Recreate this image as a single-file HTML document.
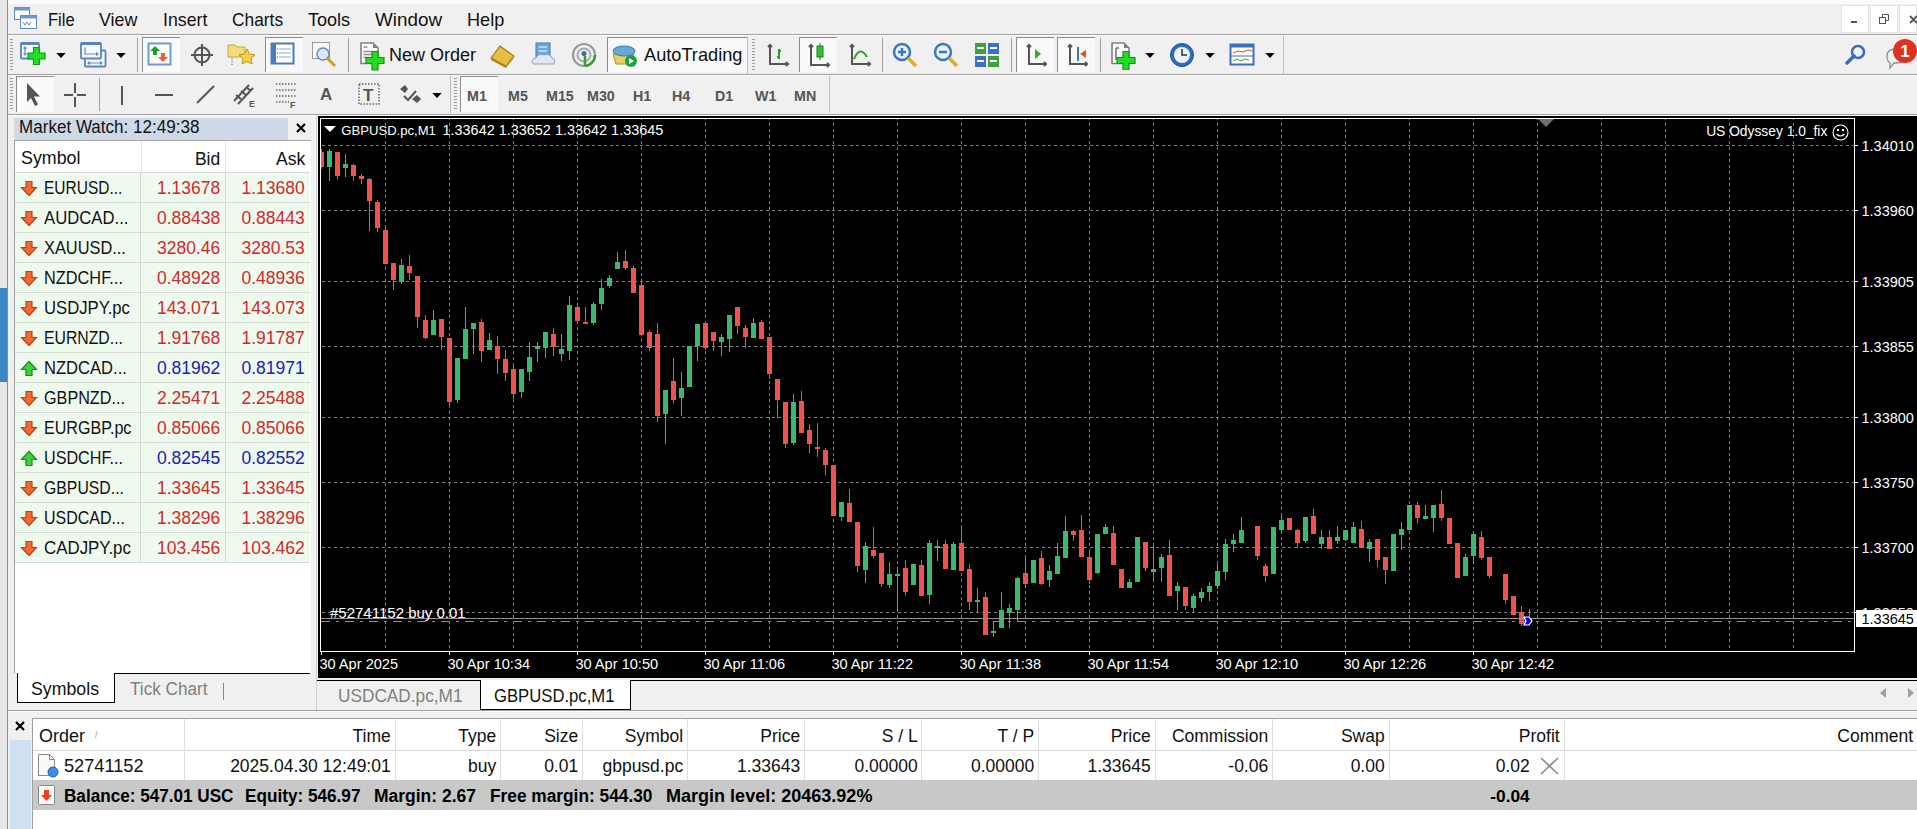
<!DOCTYPE html>
<html><head><meta charset="utf-8"><style>
html,body{margin:0;padding:0;}
body{width:1917px;height:829px;overflow:hidden;position:relative;background:#f0f0f0;font-family:"Liberation Sans", sans-serif;}
</style></head><body>
<div style="position:absolute;left:0px;top:0px;width:1917px;height:4px;background:#fbfbfb;"></div>
<div style="position:absolute;left:0px;top:0px;width:7px;height:829px;background:#e6e6e6;"></div>
<div style="position:absolute;left:0px;top:288px;width:7px;height:94px;background:#3a87c4;"></div>
<div style="position:absolute;left:7px;top:0px;width:1px;height:829px;background:#8c8c8c;"></div>
<div style="position:absolute;left:8px;top:34px;width:1909px;height:1px;background:#a0a0a0;"></div>
<svg style="position:absolute;left:13px;top:6px" width="25" height="24" viewBox="0 0 25 24"><rect x="1.5" y="1.5" width="15" height="12" fill="#fff" stroke="#5a88c0"/><rect x="1.5" y="1.5" width="15" height="3" fill="#6a98d0"/><rect x="7.5" y="9.5" width="16" height="13" fill="#fff" stroke="#5a88c0"/><rect x="7.5" y="9.5" width="16" height="3" fill="#6a98d0"/><path d="M10,16 l2,3 2,-3 2,3 2,-3" stroke="#5a88c0" fill="none"/></svg>
<div style="position:absolute;left:47.6px;top:11.93px;font-size:17.8px;line-height:1;color:#111;font-weight:400;white-space:pre;transform:scaleX(0.9309);transform-origin:left top;">File</div>
<div style="position:absolute;left:99.10000000000001px;top:11.93px;font-size:17.8px;line-height:1;color:#111;font-weight:400;white-space:pre;transform:scaleX(1.0036);transform-origin:left top;">View</div>
<div style="position:absolute;left:162.79999999999998px;top:11.93px;font-size:17.8px;line-height:1;color:#111;font-weight:400;white-space:pre;transform:scaleX(0.9973);transform-origin:left top;">Insert</div>
<div style="position:absolute;left:232.0px;top:11.93px;font-size:17.8px;line-height:1;color:#111;font-weight:400;white-space:pre;transform:scaleX(0.9747);transform-origin:left top;">Charts</div>
<div style="position:absolute;left:307.9px;top:11.93px;font-size:17.8px;line-height:1;color:#111;font-weight:400;white-space:pre;transform:scaleX(1.0155);transform-origin:left top;">Tools</div>
<div style="position:absolute;left:375.2px;top:11.93px;font-size:17.8px;line-height:1;color:#111;font-weight:400;white-space:pre;transform:scaleX(1.0599);transform-origin:left top;">Window</div>
<div style="position:absolute;left:467.4px;top:11.93px;font-size:17.8px;line-height:1;color:#111;font-weight:400;white-space:pre;transform:scaleX(1.0189);transform-origin:left top;">Help</div>
<div style="position:absolute;left:1841px;top:5px;width:28px;height:28px;background:#fff;box-sizing:border-box;border:1px solid #e4e4e4;"></div>
<div style="position:absolute;left:1870px;top:5px;width:28px;height:28px;background:#fff;box-sizing:border-box;border:1px solid #e4e4e4;"></div>
<div style="position:absolute;left:1899px;top:5px;width:18px;height:28px;background:#fff;box-sizing:border-box;border:1px solid #e4e4e4;"></div>
<div style="position:absolute;left:1851px;top:21px;width:6px;height:2px;background:#555;"></div>
<svg style="position:absolute;left:1879px;top:14px" width="10" height="10" viewBox="0 0 10 10"><rect x="0.5" y="3.5" width="6" height="6" fill="none" stroke="#555"/><path d="M3.5,3.5 v-3 h6 v6 h-3" fill="none" stroke="#555"/></svg>
<svg style="position:absolute;left:1909px;top:15px" width="9" height="9" viewBox="0 0 9 9"><path d="M1,1 l7,7 M8,1 l-7,7" stroke="#555" stroke-width="1.8"/></svg>
<div style="position:absolute;left:8px;top:35px;width:1909px;height:1px;background:#fdfdfd;"></div>
<div style="position:absolute;left:8px;top:74px;width:1909px;height:1px;background:#a0a0a0;"></div>
<div style="position:absolute;left:8px;top:75px;width:1909px;height:1px;background:#fdfdfd;"></div>
<div style="position:absolute;left:10px;top:39px;width:3px;height:33px;background:repeating-linear-gradient(#9a9a9a 0 1px, transparent 1px 3px);"></div>
<svg style="position:absolute;left:20px;top:42px" width="27" height="24" viewBox="0 0 27 24"><rect x="1" y="1" width="18" height="15.5" rx="1" fill="#f6faff" stroke="#5a84bc" stroke-width="1.8"/><rect x="1" y="0.5" width="18" height="2.5" fill="#5a84bc"/><path d="M5,5 v8 M3.5,6.5 l1.5,-1.5 1.5,1.5 M3.5,11.5 l1.5,1.5 1.5,-1.5" stroke="#6a8cb8" stroke-width="1.2" fill="none"/><path d="M13.5,5.5 h6 v5.5 h5.5 v6 h-5.5 v5.5 h-6 v-5.5 h-5.5 v-6 h5.5 z" fill="#22dd22" stroke="#159a15" stroke-width="1.2"/></svg>
<svg style="position:absolute;left:56px;top:53px" width="10" height="6" viewBox="0 0 10 6"><polygon points="0.3,0 9.7,0 5,5" fill="#000"/></svg>
<svg style="position:absolute;left:80px;top:42px" width="27" height="26" viewBox="0 0 27 26"><rect x="5" y="8.5" width="20.5" height="16" rx="1" fill="#f6faff" stroke="#5a84bc" stroke-width="1.8"/><rect x="1" y="1" width="20" height="15.5" rx="1" fill="#f6faff" stroke="#5a84bc" stroke-width="1.8"/><rect x="1" y="0.5" width="20" height="2.5" fill="#5a84bc"/><path d="M4,12 h14 M16,10.5 l2,1.5 -2,1.5 M5,5.5 v7" stroke="#6a8cb8" stroke-width="1.2" fill="none"/><path d="M8,21 h14 M10,19.5 l-2,1.5 2,1.5 M20,19.5 l2,1.5 -2,1.5" stroke="#6a8cb8" stroke-width="1.2" fill="none"/></svg>
<svg style="position:absolute;left:116px;top:53px" width="10" height="6" viewBox="0 0 10 6"><polygon points="0.3,0 9.7,0 5,5" fill="#000"/></svg>
<div style="position:absolute;left:137px;top:38px;width:1px;height:34px;background:#a0a0a0;"></div>
<div style="position:absolute;left:142px;top:37px;width:38px;height:35px;background:#f9f9f9;box-sizing:border-box;border-top:1px solid #8c8c8c;border-left:1px solid #8c8c8c;"></div>
<svg style="position:absolute;left:147px;top:42px" width="25" height="24" viewBox="0 0 25 24"><rect x="1.5" y="1.5" width="22" height="21" fill="#fff" stroke="#6f9bd4" stroke-width="2"/><path d="M8,4 l-5,5 h3 v4 h4 v-4 h3 z" fill="#22a022"/><path d="M16,20 l5,-5 h-3 v-4 h-4 v4 h-3 z" fill="#f06030"/></svg>
<svg style="position:absolute;left:190px;top:43px" width="24" height="24" viewBox="0 0 24 24"><circle cx="12" cy="12" r="7.5" fill="none" stroke="#555" stroke-width="2"/><path d="M12,1 v22 M1,12 h22" stroke="#555" stroke-width="2"/></svg>
<svg style="position:absolute;left:227px;top:41px" width="29" height="26" viewBox="0 0 29 26"><path d="M1,4 h7 l2,2 h8 v10 h-17 z" fill="#f4dc78" stroke="#c8a840"/><path d="M20,8 l2.5,5 5.5,.8 -4,3.8 1,5.4 -5,-2.6 -5,2.6 1,-5.4 -4,-3.8 5.5,-.8z" fill="#f8d040" stroke="#c09020"/><path d="M5,17 v8" stroke="#666" stroke-dasharray="1,1"/></svg>
<div style="position:absolute;left:265px;top:37px;width:38px;height:35px;background:#f9f9f9;box-sizing:border-box;border-top:1px solid #8c8c8c;border-left:1px solid #8c8c8c;"></div>
<svg style="position:absolute;left:270px;top:42px" width="25" height="24" viewBox="0 0 25 24"><rect x="1.5" y="1.5" width="22" height="20" fill="#fff" stroke="#4a7cc0" stroke-width="2"/><rect x="2" y="2" width="4" height="19" fill="#4a7cc0"/><path d="M9,7 h12 M9,11 h12 M9,15 h12" stroke="#8aa8d0"/><path d="M7,7 h1 M7,11 h1 M7,15 h1" stroke="#a02020"/></svg>
<svg style="position:absolute;left:311px;top:41px" width="28" height="27" viewBox="0 0 28 27"><rect x="1.5" y="1.5" width="17" height="16" fill="#f8f8f8" stroke="#999"/><circle cx="12" cy="13" r="6" fill="#d8e8f8" stroke="#6a8cc0" stroke-width="1.5"/><path d="M16,17 l8,8" stroke="#d0a020" stroke-width="3"/></svg>
<div style="position:absolute;left:348px;top:38px;width:1px;height:34px;background:#a0a0a0;"></div>
<svg style="position:absolute;left:360px;top:42px" width="27" height="29" viewBox="0 0 27 29"><path d="M1,1 h12 l5,5 v15.5 h-17 z" fill="#fbfbfb" stroke="#808080" stroke-width="1.6"/><path d="M13,1 v5 h5" fill="#808080"/><path d="M3.5,5 h4 M3.5,9.5 h9 M3.5,12.5 h9 M3.5,15.5 h5" stroke="#909090" stroke-width="1.5"/><path d="M12,9.5 h6 v6 h6 v6 h-6 v6.5 h-6 v-6.5 h-6 v-6 h6 z" fill="#22dd22" stroke="#149614" stroke-width="1.2"/></svg>
<div style="position:absolute;left:389px;top:45.76px;font-size:18px;line-height:1;color:#111;font-weight:400;white-space:pre;transform:scaleX(0.9998);transform-origin:left top;">New Order</div>
<svg style="position:absolute;left:489px;top:44px" width="27" height="24" viewBox="0 0 27 24"><path d="M2,14 L11,2 L25,12 L17,22 z" fill="#e8c040" stroke="#a07818" stroke-width="1.2"/><path d="M2,14 L17,22 L17,24 L2,16 z" fill="#b08020"/><path d="M17,22 L25,12 v2 L17,24z" fill="#c89830"/></svg>
<svg style="position:absolute;left:530px;top:42px" width="26" height="24" viewBox="0 0 26 24"><rect x="6" y="1" width="14" height="14" fill="#6aa8e0" stroke="#3a78c0"/><path d="M9,5 h8 M9,9 h8" stroke="#fff"/><path d="M3,22 q-3,-5 3,-6 q2,-5 8,-3 q6,-2 8,3 q4,1 2,6 z" fill="#dfe8f2" stroke="#8aa0c0"/></svg>
<svg style="position:absolute;left:571px;top:42px" width="26" height="26" viewBox="0 0 26 26"><circle cx="13" cy="13" r="11" fill="none" stroke="#9a9a9a" stroke-width="2.2"/><circle cx="13" cy="13" r="6.5" fill="none" stroke="#a8a8a8" stroke-width="2"/><circle cx="13" cy="11.5" r="2.5" fill="#3a6cb0"/><path d="M14,24 A11,11 0 0 0 24,13" fill="none" stroke="#38a038" stroke-width="2.6"/><path d="M14,14 v10" stroke="#38a038" stroke-width="2.6"/></svg>
<div style="position:absolute;left:607px;top:37px;width:141px;height:35px;background:#f9f9f9;box-sizing:border-box;border-top:1px solid #8c8c8c;border-left:1px solid #8c8c8c;"></div>
<svg style="position:absolute;left:611px;top:42px" width="27" height="26" viewBox="0 0 27 26"><path d="M2,12 l3,10 h14 l4,-10 z" fill="#e8d060" stroke="#b09030"/><ellipse cx="13" cy="9" rx="11" ry="5" fill="#6aa8d8" stroke="#3a78b0"/><circle cx="20" cy="19" r="6" fill="#20a040"/><path d="M18,16 l5,3 -5,3z" fill="#fff"/></svg>
<div style="position:absolute;left:643.5px;top:45.59px;font-size:18.2px;line-height:1;color:#111;font-weight:400;white-space:pre;transform:scaleX(1.0002);transform-origin:left top;">AutoTrading</div>
<div style="position:absolute;left:747px;top:36px;width:1px;height:38px;background:#c0c0c0;"></div>
<div style="position:absolute;left:752px;top:39px;width:3px;height:33px;background:repeating-linear-gradient(#9a9a9a 0 1px, transparent 1px 3px);"></div>
<svg style="position:absolute;left:766px;top:43px" width="24" height="24" viewBox="0 0 24 24"><path d="M4,2 v19 h18 M2,4 l2,-2 2,2 M20,19 l2,2 -2,2" stroke="#555" stroke-width="2" fill="none"/><path d="M13,6 v10 M11,14 h2 M13,8 h2" stroke="#28a028" stroke-width="2"/></svg>
<div style="position:absolute;left:799px;top:37px;width:38px;height:35px;background:#f9f9f9;box-sizing:border-box;border-top:1px solid #8c8c8c;border-left:1px solid #8c8c8c;"></div>
<svg style="position:absolute;left:807px;top:42px" width="24" height="26" viewBox="0 0 24 26"><path d="M4,3 v20 h18 M2,5 l2,-2 2,2 M20,21 l2,2 -2,2" stroke="#555" stroke-width="2" fill="none"/><rect x="10" y="4" width="6" height="11" fill="#30c030" stroke="#208020"/><path d="M13,1 v3 M13,15 v3" stroke="#208020"/></svg>
<svg style="position:absolute;left:848px;top:43px" width="24" height="24" viewBox="0 0 24 24"><path d="M4,2 v19 h18 M2,4 l2,-2 2,2 M20,19 l2,2 -2,2" stroke="#555" stroke-width="2" fill="none"/><path d="M6,16 q6,-14 13,-2" stroke="#30a030" stroke-width="2" fill="none"/></svg>
<div style="position:absolute;left:882px;top:38px;width:1px;height:34px;background:#a0a0a0;"></div>
<svg style="position:absolute;left:892px;top:42px" width="26" height="26" viewBox="0 0 26 26"><circle cx="10" cy="10" r="8" fill="#e8f0fa" stroke="#3a78c0" stroke-width="2.5"/><path d="M6,10 h8 M10,6 v8" stroke="#3a78c0" stroke-width="2.5"/><path d="M16,16 l8,8" stroke="#d8b028" stroke-width="3.5"/></svg>
<svg style="position:absolute;left:933px;top:42px" width="26" height="26" viewBox="0 0 26 26"><circle cx="10" cy="10" r="8" fill="#e8f0fa" stroke="#3a78c0" stroke-width="2.5"/><path d="M6,10 h8" stroke="#3a78c0" stroke-width="2.5"/><path d="M16,16 l8,8" stroke="#d8b028" stroke-width="3.5"/></svg>
<svg style="position:absolute;left:974px;top:42px" width="26" height="26" viewBox="0 0 26 26"><rect x="1" y="1" width="11" height="11" fill="#40a040"/><rect x="14" y="1" width="11" height="11" fill="#3a70c8"/><rect x="1" y="14" width="11" height="11" fill="#3a70c8"/><rect x="14" y="14" width="11" height="11" fill="#40a040"/><path d="M3,6 h7 M16,6 h7 M3,19 h7 M16,19 h7" stroke="#fff" stroke-width="2"/></svg>
<div style="position:absolute;left:1011px;top:38px;width:1px;height:34px;background:#a0a0a0;"></div>
<div style="position:absolute;left:1016px;top:37px;width:38px;height:35px;background:#f9f9f9;box-sizing:border-box;border-top:1px solid #8c8c8c;border-left:1px solid #8c8c8c;"></div>
<svg style="position:absolute;left:1025px;top:43px" width="22" height="24" viewBox="0 0 22 24"><path d="M4,2 v19 h17 M2,4 l2,-2 2,2 M19,19 l2,2 -2,2" stroke="#555" stroke-width="2" fill="none"/><path d="M10,6 l6,5 -6,5z" fill="#30b030"/></svg>
<div style="position:absolute;left:1057px;top:37px;width:38px;height:35px;background:#f9f9f9;box-sizing:border-box;border-top:1px solid #8c8c8c;border-left:1px solid #8c8c8c;"></div>
<svg style="position:absolute;left:1066px;top:43px" width="22" height="24" viewBox="0 0 22 24"><path d="M4,2 v19 h17 M2,4 l2,-2 2,2 M19,19 l2,2 -2,2" stroke="#555" stroke-width="2" fill="none"/><path d="M12,4 v14" stroke="#3a78c0" stroke-width="2"/><path d="M14,11 l6,-4 v8z" fill="#e05020"/></svg>
<div style="position:absolute;left:1100px;top:38px;width:1px;height:34px;background:#a0a0a0;"></div>
<svg style="position:absolute;left:1111px;top:42px" width="28" height="28" viewBox="0 0 28 28"><path d="M1,1 h12 l5,5 v15.5 h-17 z" fill="#fbfbfb" stroke="#808080" stroke-width="1.6"/><path d="M13,1 v5 h5" fill="#808080"/><path d="M5,6 v12 M5,6 h3" stroke="#707070" stroke-width="1.5"/><path d="M12,9.5 h6 v6 h6 v6 h-6 v6.5 h-6 v-6.5 h-6 v-6 h6 z" fill="#22dd22" stroke="#149614" stroke-width="1.2"/></svg>
<svg style="position:absolute;left:1145px;top:53px" width="10" height="6" viewBox="0 0 10 6"><polygon points="0.3,0 9.7,0 5,5" fill="#000"/></svg>
<svg style="position:absolute;left:1169px;top:42px" width="26" height="26" viewBox="0 0 26 26"><circle cx="13" cy="13" r="11.5" fill="#2e6cc0" stroke="#1c50a0"/><circle cx="13" cy="13" r="8" fill="#eef4fc"/><path d="M13,7 v6 h5" stroke="#333" stroke-width="1.5" fill="none"/></svg>
<svg style="position:absolute;left:1205px;top:53px" width="10" height="6" viewBox="0 0 10 6"><polygon points="0.3,0 9.7,0 5,5" fill="#000"/></svg>
<svg style="position:absolute;left:1229px;top:43px" width="26" height="24" viewBox="0 0 26 24"><rect x="1.5" y="1.5" width="23" height="20" fill="#fff" stroke="#3a70c0" stroke-width="2"/><rect x="1.5" y="1.5" width="23" height="3" fill="#3a70c0"/><path d="M4,10 l5,-2 5,1 5,-2 4,1" stroke="#e04020" fill="none"/><path d="M2,13 h22" stroke="#3a70c0"/><path d="M4,18 l4,-2 4,2 4,-2 4,1" stroke="#30a030" fill="none"/></svg>
<svg style="position:absolute;left:1265px;top:53px" width="10" height="6" viewBox="0 0 10 6"><polygon points="0.3,0 9.7,0 5,5" fill="#000"/></svg>
<div style="position:absolute;left:1283px;top:36px;width:1px;height:38px;background:#c0c0c0;"></div>
<svg style="position:absolute;left:1845px;top:44px" width="22" height="22" viewBox="0 0 22 22"><circle cx="13" cy="8" r="6" fill="#f0f4fa" stroke="#3a6cc0" stroke-width="2.5"/><path d="M9,12 L2,19" stroke="#3a6cc0" stroke-width="3.5" stroke-linecap="round"/></svg>
<svg style="position:absolute;left:1883px;top:38px" width="34" height="32" viewBox="0 0 34 32"><path d="M4,18 q0,-7 9,-7 q9,0 9,7 q0,7 -9,7 h-2 l-4,5 v-5 q-3,-2 -3,-7z" fill="#f0f0f0" stroke="#909090" stroke-width="1.3"/><circle cx="22" cy="13" r="12" fill="#e03020"/><text x="22" y="19" text-anchor="middle" font-family="Liberation Sans" font-weight="700" font-size="17px" fill="#fff">1</text></svg>
<div style="position:absolute;left:8px;top:114px;width:1909px;height:1px;background:#a0a0a0;"></div>
<div style="position:absolute;left:8px;top:115px;width:1909px;height:1px;background:#fdfdfd;"></div>
<div style="position:absolute;left:10px;top:78px;width:3px;height:33px;background:repeating-linear-gradient(#9a9a9a 0 1px, transparent 1px 3px);"></div>
<div style="position:absolute;left:16px;top:76px;width:38px;height:36px;background:#f9f9f9;box-sizing:border-box;border-top:1px solid #8c8c8c;border-left:1px solid #8c8c8c;"></div>
<div style="position:absolute;left:99px;top:78px;width:1px;height:33px;background:#a0a0a0;"></div>
<svg style="position:absolute;left:24px;top:82px" width="17" height="25" viewBox="0 0 17 25"><path d="M3,1 v19 l4,-4 l4,8 l3,-1.5 l-4,-8 h6 z" fill="#555"/></svg>
<svg style="position:absolute;left:63px;top:82px" width="24" height="26" viewBox="0 0 24 26"><path d="M12,1 v10 M12,15 v10 M1,13 h9 M14,13 h9" stroke="#555" stroke-width="2"/></svg>
<div style="position:absolute;left:121px;top:86px;width:2px;height:19px;background:#555;"></div>
<div style="position:absolute;left:155px;top:94px;width:18px;height:2px;background:#555;"></div>
<svg style="position:absolute;left:195px;top:84px" width="21" height="21" viewBox="0 0 21 21"><path d="M2,19 L19,2" stroke="#555" stroke-width="2"/></svg>
<svg style="position:absolute;left:232px;top:81px" width="26" height="27" viewBox="0 0 26 27"><path d="M2,20 L17,4 M6,23 L21,7 M4,14 l5,4 M9,10 l5,4 M14,6 l5,4" stroke="#555" stroke-width="2"/><text x="17" y="26" font-family="Liberation Sans" font-weight="700" font-size="9px" fill="#555">E</text></svg>
<svg style="position:absolute;left:275px;top:82px" width="24" height="27" viewBox="0 0 24 27"><path d="M1,2 h20 M1,8 h20 M1,14 h20 M1,20 h13" stroke="#666" stroke-dasharray="1.5,1.5" stroke-width="1.5"/><text x="15" y="26" font-family="Liberation Sans" font-weight="700" font-size="9px" fill="#555">F</text></svg>
<svg style="position:absolute;left:320px;top:85px" width="15" height="17" viewBox="0 0 15 17"><text x="0" y="15" font-family="Liberation Sans" font-weight="700" font-size="17px" fill="#555">A</text></svg>
<svg style="position:absolute;left:358px;top:83px" width="22" height="22" viewBox="0 0 22 22"><rect x="1" y="1" width="20" height="20" fill="none" stroke="#666" stroke-dasharray="1.5,1.5" stroke-width="1.5"/><text x="5" y="18" font-family="Liberation Sans" font-weight="700" font-size="17px" fill="#555">T</text></svg>
<svg style="position:absolute;left:398px;top:83px" width="24" height="23" viewBox="0 0 24 23"><path d="M2,6 l5,-4 3,4 -3,4z M14,16 l5,-4 4,4 -4,4z" fill="#555"/><path d="M6,13 l4,4 l8,-9" stroke="#555" stroke-width="2" fill="none"/></svg>
<svg style="position:absolute;left:432px;top:93px" width="10" height="6" viewBox="0 0 10 6"><polygon points="0.3,0 9.7,0 5,5" fill="#000"/></svg>
<div style="position:absolute;left:450px;top:76px;width:1px;height:37px;background:#c0c0c0;"></div>
<div style="position:absolute;left:454px;top:78px;width:3px;height:33px;background:repeating-linear-gradient(#9a9a9a 0 1px, transparent 1px 3px);"></div>
<div style="position:absolute;left:460px;top:76px;width:38px;height:36px;background:#f9f9f9;box-sizing:border-box;border-top:1px solid #8c8c8c;border-left:1px solid #8c8c8c;"></div>
<div style="position:absolute;left:467px;top:88.90px;font-size:14.3px;line-height:1;color:#555;font-weight:700;white-space:pre;">M1</div>
<div style="position:absolute;left:508px;top:88.90px;font-size:14.3px;line-height:1;color:#555;font-weight:700;white-space:pre;">M5</div>
<div style="position:absolute;left:546px;top:88.90px;font-size:14.3px;line-height:1;color:#555;font-weight:700;white-space:pre;">M15</div>
<div style="position:absolute;left:587px;top:88.90px;font-size:14.3px;line-height:1;color:#555;font-weight:700;white-space:pre;">M30</div>
<div style="position:absolute;left:633px;top:88.90px;font-size:14.3px;line-height:1;color:#555;font-weight:700;white-space:pre;">H1</div>
<div style="position:absolute;left:672px;top:88.90px;font-size:14.3px;line-height:1;color:#555;font-weight:700;white-space:pre;">H4</div>
<div style="position:absolute;left:715px;top:88.90px;font-size:14.3px;line-height:1;color:#555;font-weight:700;white-space:pre;">D1</div>
<div style="position:absolute;left:755px;top:88.90px;font-size:14.3px;line-height:1;color:#555;font-weight:700;white-space:pre;">W1</div>
<div style="position:absolute;left:794px;top:88.90px;font-size:14.3px;line-height:1;color:#555;font-weight:700;white-space:pre;">MN</div>
<div style="position:absolute;left:829px;top:76px;width:1px;height:37px;background:#c0c0c0;"></div>
<div style="position:absolute;left:14px;top:118px;width:274px;height:22px;background:#cdd9e6;"></div>
<div style="position:absolute;left:18.5px;top:119.19px;font-size:17.5px;line-height:1;color:#111;font-weight:400;white-space:pre;transform:scaleX(0.975);transform-origin:left top;">Market Watch: 12:49:38</div>
<svg style="position:absolute;left:296px;top:123px" width="10" height="10" viewBox="0 0 10 10"><path d="M1,1 l8,8 M9,1 l-8,8" stroke="#000" stroke-width="2.2"/></svg>
<div style="position:absolute;left:14px;top:140px;width:297px;height:533px;background:#fff;box-sizing:border-box;border-left:1px solid #a0a0a0;border-top:1px solid #a8a8a8;"></div>
<div style="position:absolute;left:15px;top:172px;width:295px;height:1px;background:#d8d8d8;"></div>
<div style="position:absolute;left:141px;top:141px;width:1px;height:31px;background:#e4e4e4;"></div>
<div style="position:absolute;left:225px;top:141px;width:1px;height:31px;background:#e4e4e4;"></div>
<div style="position:absolute;left:20.5px;top:150.43px;font-size:17.8px;line-height:1;color:#111;font-weight:400;white-space:pre;transform:scaleX(1.0024);transform-origin:left top;">Symbol</div>
<div style="position:absolute;right:1696.80px;top:150.69px;font-size:17.5px;line-height:1;color:#111;font-weight:400;white-space:pre;">Bid</div>
<div style="position:absolute;right:1611.80px;top:150.69px;font-size:17.5px;line-height:1;color:#111;font-weight:400;white-space:pre;">Ask</div>
<div style="position:absolute;left:15px;top:173px;width:295px;height:29px;background:#effaef;"></div>
<div style="position:absolute;left:15px;top:202px;width:295px;height:1px;background:#d4dcd4;"></div>
<div style="position:absolute;left:140px;top:173px;width:1px;height:30px;background:#d4dcd4;"></div>
<div style="position:absolute;left:225px;top:173px;width:1px;height:30px;background:#d4dcd4;"></div>
<svg style="position:absolute;left:20px;top:180px" width="18" height="17" viewBox="0 0 18 17"><path d="M6,1.5 h6 v6 h4.5 l-7.5,8 l-7.5,-8 h4.5 z" fill="#f46a30" stroke="#b8401c" stroke-width="1.2"/></svg>
<div style="position:absolute;left:44px;top:180.43px;font-size:17.8px;line-height:1;color:#111;font-weight:400;white-space:pre;transform:scaleX(0.8722);transform-origin:left top;">EURUSD...</div>
<div style="position:absolute;right:1696.80px;top:180.19px;font-size:17.5px;line-height:1;color:#d42828;font-weight:400;white-space:pre;">1.13678</div>
<div style="position:absolute;right:1612.30px;top:180.19px;font-size:17.5px;line-height:1;color:#d42828;font-weight:400;white-space:pre;">1.13680</div>
<div style="position:absolute;left:15px;top:203px;width:295px;height:29px;background:#effaef;"></div>
<div style="position:absolute;left:15px;top:232px;width:295px;height:1px;background:#d4dcd4;"></div>
<div style="position:absolute;left:140px;top:203px;width:1px;height:30px;background:#d4dcd4;"></div>
<div style="position:absolute;left:225px;top:203px;width:1px;height:30px;background:#d4dcd4;"></div>
<svg style="position:absolute;left:20px;top:210px" width="18" height="17" viewBox="0 0 18 17"><path d="M6,1.5 h6 v6 h4.5 l-7.5,8 l-7.5,-8 h4.5 z" fill="#f46a30" stroke="#b8401c" stroke-width="1.2"/></svg>
<div style="position:absolute;left:44px;top:210.43px;font-size:17.8px;line-height:1;color:#111;font-weight:400;white-space:pre;transform:scaleX(0.9389);transform-origin:left top;">AUDCAD...</div>
<div style="position:absolute;right:1696.80px;top:210.19px;font-size:17.5px;line-height:1;color:#d42828;font-weight:400;white-space:pre;">0.88438</div>
<div style="position:absolute;right:1612.30px;top:210.19px;font-size:17.5px;line-height:1;color:#d42828;font-weight:400;white-space:pre;">0.88443</div>
<div style="position:absolute;left:15px;top:233px;width:295px;height:29px;background:#effaef;"></div>
<div style="position:absolute;left:15px;top:262px;width:295px;height:1px;background:#d4dcd4;"></div>
<div style="position:absolute;left:140px;top:233px;width:1px;height:30px;background:#d4dcd4;"></div>
<div style="position:absolute;left:225px;top:233px;width:1px;height:30px;background:#d4dcd4;"></div>
<svg style="position:absolute;left:20px;top:240px" width="18" height="17" viewBox="0 0 18 17"><path d="M6,1.5 h6 v6 h4.5 l-7.5,8 l-7.5,-8 h4.5 z" fill="#f46a30" stroke="#b8401c" stroke-width="1.2"/></svg>
<div style="position:absolute;left:44px;top:240.43px;font-size:17.8px;line-height:1;color:#111;font-weight:400;white-space:pre;transform:scaleX(0.9211);transform-origin:left top;">XAUUSD...</div>
<div style="position:absolute;right:1696.80px;top:240.19px;font-size:17.5px;line-height:1;color:#d42828;font-weight:400;white-space:pre;">3280.46</div>
<div style="position:absolute;right:1612.30px;top:240.19px;font-size:17.5px;line-height:1;color:#d42828;font-weight:400;white-space:pre;">3280.53</div>
<div style="position:absolute;left:15px;top:263px;width:295px;height:29px;background:#effaef;"></div>
<div style="position:absolute;left:15px;top:292px;width:295px;height:1px;background:#d4dcd4;"></div>
<div style="position:absolute;left:140px;top:263px;width:1px;height:30px;background:#d4dcd4;"></div>
<div style="position:absolute;left:225px;top:263px;width:1px;height:30px;background:#d4dcd4;"></div>
<svg style="position:absolute;left:20px;top:270px" width="18" height="17" viewBox="0 0 18 17"><path d="M6,1.5 h6 v6 h4.5 l-7.5,8 l-7.5,-8 h4.5 z" fill="#f46a30" stroke="#b8401c" stroke-width="1.2"/></svg>
<div style="position:absolute;left:44px;top:270.43px;font-size:17.8px;line-height:1;color:#111;font-weight:400;white-space:pre;transform:scaleX(0.9183);transform-origin:left top;">NZDCHF...</div>
<div style="position:absolute;right:1696.80px;top:270.19px;font-size:17.5px;line-height:1;color:#d42828;font-weight:400;white-space:pre;">0.48928</div>
<div style="position:absolute;right:1612.30px;top:270.19px;font-size:17.5px;line-height:1;color:#d42828;font-weight:400;white-space:pre;">0.48936</div>
<div style="position:absolute;left:15px;top:293px;width:295px;height:29px;background:#effaef;"></div>
<div style="position:absolute;left:15px;top:322px;width:295px;height:1px;background:#d4dcd4;"></div>
<div style="position:absolute;left:140px;top:293px;width:1px;height:30px;background:#d4dcd4;"></div>
<div style="position:absolute;left:225px;top:293px;width:1px;height:30px;background:#d4dcd4;"></div>
<svg style="position:absolute;left:20px;top:300px" width="18" height="17" viewBox="0 0 18 17"><path d="M6,1.5 h6 v6 h4.5 l-7.5,8 l-7.5,-8 h4.5 z" fill="#f46a30" stroke="#b8401c" stroke-width="1.2"/></svg>
<div style="position:absolute;left:44px;top:300.43px;font-size:17.8px;line-height:1;color:#111;font-weight:400;white-space:pre;transform:scaleX(0.9381);transform-origin:left top;">USDJPY.pc</div>
<div style="position:absolute;right:1696.80px;top:300.19px;font-size:17.5px;line-height:1;color:#d42828;font-weight:400;white-space:pre;">143.071</div>
<div style="position:absolute;right:1612.30px;top:300.19px;font-size:17.5px;line-height:1;color:#d42828;font-weight:400;white-space:pre;">143.073</div>
<div style="position:absolute;left:15px;top:323px;width:295px;height:29px;background:#effaef;"></div>
<div style="position:absolute;left:15px;top:352px;width:295px;height:1px;background:#d4dcd4;"></div>
<div style="position:absolute;left:140px;top:323px;width:1px;height:30px;background:#d4dcd4;"></div>
<div style="position:absolute;left:225px;top:323px;width:1px;height:30px;background:#d4dcd4;"></div>
<svg style="position:absolute;left:20px;top:330px" width="18" height="17" viewBox="0 0 18 17"><path d="M6,1.5 h6 v6 h4.5 l-7.5,8 l-7.5,-8 h4.5 z" fill="#f46a30" stroke="#b8401c" stroke-width="1.2"/></svg>
<div style="position:absolute;left:44px;top:330.43px;font-size:17.8px;line-height:1;color:#111;font-weight:400;white-space:pre;transform:scaleX(0.8876);transform-origin:left top;">EURNZD...</div>
<div style="position:absolute;right:1696.80px;top:330.19px;font-size:17.5px;line-height:1;color:#d42828;font-weight:400;white-space:pre;">1.91768</div>
<div style="position:absolute;right:1612.30px;top:330.19px;font-size:17.5px;line-height:1;color:#d42828;font-weight:400;white-space:pre;">1.91787</div>
<div style="position:absolute;left:15px;top:353px;width:295px;height:29px;background:#effaef;"></div>
<div style="position:absolute;left:15px;top:382px;width:295px;height:1px;background:#d4dcd4;"></div>
<div style="position:absolute;left:140px;top:353px;width:1px;height:30px;background:#d4dcd4;"></div>
<div style="position:absolute;left:225px;top:353px;width:1px;height:30px;background:#d4dcd4;"></div>
<svg style="position:absolute;left:20px;top:360px" width="18" height="17" viewBox="0 0 18 17"><path d="M6,15.5 h6 v-6 h4.5 l-7.5,-8 l-7.5,8 h4.5 z" fill="#3cd03c" stroke="#1a8a1a" stroke-width="1.2"/></svg>
<div style="position:absolute;left:44px;top:360.43px;font-size:17.8px;line-height:1;color:#111;font-weight:400;white-space:pre;transform:scaleX(0.9326);transform-origin:left top;">NZDCAD...</div>
<div style="position:absolute;right:1696.80px;top:360.19px;font-size:17.5px;line-height:1;color:#2020b8;font-weight:400;white-space:pre;">0.81962</div>
<div style="position:absolute;right:1612.30px;top:360.19px;font-size:17.5px;line-height:1;color:#2020b8;font-weight:400;white-space:pre;">0.81971</div>
<div style="position:absolute;left:15px;top:383px;width:295px;height:29px;background:#effaef;"></div>
<div style="position:absolute;left:15px;top:412px;width:295px;height:1px;background:#d4dcd4;"></div>
<div style="position:absolute;left:140px;top:383px;width:1px;height:30px;background:#d4dcd4;"></div>
<div style="position:absolute;left:225px;top:383px;width:1px;height:30px;background:#d4dcd4;"></div>
<svg style="position:absolute;left:20px;top:390px" width="18" height="17" viewBox="0 0 18 17"><path d="M6,1.5 h6 v6 h4.5 l-7.5,8 l-7.5,-8 h4.5 z" fill="#f46a30" stroke="#b8401c" stroke-width="1.2"/></svg>
<div style="position:absolute;left:44px;top:390.43px;font-size:17.8px;line-height:1;color:#111;font-weight:400;white-space:pre;transform:scaleX(0.91);transform-origin:left top;">GBPNZD...</div>
<div style="position:absolute;right:1696.80px;top:390.19px;font-size:17.5px;line-height:1;color:#d42828;font-weight:400;white-space:pre;">2.25471</div>
<div style="position:absolute;right:1612.30px;top:390.19px;font-size:17.5px;line-height:1;color:#d42828;font-weight:400;white-space:pre;">2.25488</div>
<div style="position:absolute;left:15px;top:413px;width:295px;height:29px;background:#effaef;"></div>
<div style="position:absolute;left:15px;top:442px;width:295px;height:1px;background:#d4dcd4;"></div>
<div style="position:absolute;left:140px;top:413px;width:1px;height:30px;background:#d4dcd4;"></div>
<div style="position:absolute;left:225px;top:413px;width:1px;height:30px;background:#d4dcd4;"></div>
<svg style="position:absolute;left:20px;top:420px" width="18" height="17" viewBox="0 0 18 17"><path d="M6,1.5 h6 v6 h4.5 l-7.5,8 l-7.5,-8 h4.5 z" fill="#f46a30" stroke="#b8401c" stroke-width="1.2"/></svg>
<div style="position:absolute;left:44px;top:420.43px;font-size:17.8px;line-height:1;color:#111;font-weight:400;white-space:pre;transform:scaleX(0.9056);transform-origin:left top;">EURGBP.pc</div>
<div style="position:absolute;right:1696.80px;top:420.19px;font-size:17.5px;line-height:1;color:#d42828;font-weight:400;white-space:pre;">0.85066</div>
<div style="position:absolute;right:1612.30px;top:420.19px;font-size:17.5px;line-height:1;color:#d42828;font-weight:400;white-space:pre;">0.85066</div>
<div style="position:absolute;left:15px;top:443px;width:295px;height:29px;background:#effaef;"></div>
<div style="position:absolute;left:15px;top:472px;width:295px;height:1px;background:#d4dcd4;"></div>
<div style="position:absolute;left:140px;top:443px;width:1px;height:30px;background:#d4dcd4;"></div>
<div style="position:absolute;left:225px;top:443px;width:1px;height:30px;background:#d4dcd4;"></div>
<svg style="position:absolute;left:20px;top:450px" width="18" height="17" viewBox="0 0 18 17"><path d="M6,15.5 h6 v-6 h4.5 l-7.5,-8 l-7.5,8 h4.5 z" fill="#3cd03c" stroke="#1a8a1a" stroke-width="1.2"/></svg>
<div style="position:absolute;left:44px;top:450.43px;font-size:17.8px;line-height:1;color:#111;font-weight:400;white-space:pre;transform:scaleX(0.9078);transform-origin:left top;">USDCHF...</div>
<div style="position:absolute;right:1696.80px;top:450.19px;font-size:17.5px;line-height:1;color:#2020b8;font-weight:400;white-space:pre;">0.82545</div>
<div style="position:absolute;right:1612.30px;top:450.19px;font-size:17.5px;line-height:1;color:#2020b8;font-weight:400;white-space:pre;">0.82552</div>
<div style="position:absolute;left:15px;top:473px;width:295px;height:29px;background:#effaef;"></div>
<div style="position:absolute;left:15px;top:502px;width:295px;height:1px;background:#d4dcd4;"></div>
<div style="position:absolute;left:140px;top:473px;width:1px;height:30px;background:#d4dcd4;"></div>
<div style="position:absolute;left:225px;top:473px;width:1px;height:30px;background:#d4dcd4;"></div>
<svg style="position:absolute;left:20px;top:480px" width="18" height="17" viewBox="0 0 18 17"><path d="M6,1.5 h6 v6 h4.5 l-7.5,8 l-7.5,-8 h4.5 z" fill="#f46a30" stroke="#b8401c" stroke-width="1.2"/></svg>
<div style="position:absolute;left:44px;top:480.43px;font-size:17.8px;line-height:1;color:#111;font-weight:400;white-space:pre;transform:scaleX(0.8888);transform-origin:left top;">GBPUSD...</div>
<div style="position:absolute;right:1696.80px;top:480.19px;font-size:17.5px;line-height:1;color:#d42828;font-weight:400;white-space:pre;">1.33645</div>
<div style="position:absolute;right:1612.30px;top:480.19px;font-size:17.5px;line-height:1;color:#d42828;font-weight:400;white-space:pre;">1.33645</div>
<div style="position:absolute;left:15px;top:503px;width:295px;height:29px;background:#effaef;"></div>
<div style="position:absolute;left:15px;top:532px;width:295px;height:1px;background:#d4dcd4;"></div>
<div style="position:absolute;left:140px;top:503px;width:1px;height:30px;background:#d4dcd4;"></div>
<div style="position:absolute;left:225px;top:503px;width:1px;height:30px;background:#d4dcd4;"></div>
<svg style="position:absolute;left:20px;top:510px" width="18" height="17" viewBox="0 0 18 17"><path d="M6,1.5 h6 v6 h4.5 l-7.5,8 l-7.5,-8 h4.5 z" fill="#f46a30" stroke="#b8401c" stroke-width="1.2"/></svg>
<div style="position:absolute;left:44px;top:510.43px;font-size:17.8px;line-height:1;color:#111;font-weight:400;white-space:pre;transform:scaleX(0.9);transform-origin:left top;">USDCAD...</div>
<div style="position:absolute;right:1696.80px;top:510.19px;font-size:17.5px;line-height:1;color:#d42828;font-weight:400;white-space:pre;">1.38296</div>
<div style="position:absolute;right:1612.30px;top:510.19px;font-size:17.5px;line-height:1;color:#d42828;font-weight:400;white-space:pre;">1.38296</div>
<div style="position:absolute;left:15px;top:533px;width:295px;height:29px;background:#effaef;"></div>
<div style="position:absolute;left:15px;top:562px;width:295px;height:1px;background:#d4dcd4;"></div>
<div style="position:absolute;left:140px;top:533px;width:1px;height:30px;background:#d4dcd4;"></div>
<div style="position:absolute;left:225px;top:533px;width:1px;height:30px;background:#d4dcd4;"></div>
<svg style="position:absolute;left:20px;top:540px" width="18" height="17" viewBox="0 0 18 17"><path d="M6,1.5 h6 v6 h4.5 l-7.5,8 l-7.5,-8 h4.5 z" fill="#f46a30" stroke="#b8401c" stroke-width="1.2"/></svg>
<div style="position:absolute;left:44px;top:540.43px;font-size:17.8px;line-height:1;color:#111;font-weight:400;white-space:pre;transform:scaleX(0.949);transform-origin:left top;">CADJPY.pc</div>
<div style="position:absolute;right:1696.80px;top:540.19px;font-size:17.5px;line-height:1;color:#d42828;font-weight:400;white-space:pre;">103.456</div>
<div style="position:absolute;right:1612.30px;top:540.19px;font-size:17.5px;line-height:1;color:#d42828;font-weight:400;white-space:pre;">103.462</div>
<div style="position:absolute;left:14px;top:673px;width:297px;height:37px;background:#f0f0f0;"></div>
<div style="position:absolute;left:115px;top:673px;width:195px;height:1px;background:#000;"></div>
<div style="position:absolute;left:17px;top:673px;width:98px;height:30px;background:#fff;box-sizing:border-box;border:1px solid #000;border-top:none;"></div>
<div style="position:absolute;left:31.4px;top:680.99px;font-size:17.5px;line-height:1;color:#111;font-weight:400;white-space:pre;transform:scaleX(1.0133);transform-origin:left top;">Symbols</div>
<div style="position:absolute;left:130.2px;top:680.99px;font-size:17.5px;line-height:1;color:#808080;font-weight:400;white-space:pre;transform:scaleX(0.98);transform-origin:left top;">Tick Chart</div>
<div style="position:absolute;left:223px;top:683px;width:1px;height:17px;background:#888;"></div>
<div style="position:absolute;left:316px;top:116px;width:1px;height:594px;background:#d0d0d0;"></div>
<svg style="position:absolute;left:318px;top:116px" width="1599" height="562" viewBox="318 116 1599 562" shape-rendering="crispEdges">
<rect x="318" y="116" width="1599" height="562" fill="#000"/>
<defs><clipPath id="cc"><rect x="321" y="119" width="1533" height="532"/></clipPath></defs>
<g clip-path="url(#cc)">
<line x1="322" y1="145.5" x2="1854" y2="145.5" stroke="#808080" stroke-width="1" stroke-dasharray="3,3"/>
<line x1="322" y1="210.5" x2="1854" y2="210.5" stroke="#808080" stroke-width="1" stroke-dasharray="3,3"/>
<line x1="322" y1="281.5" x2="1854" y2="281.5" stroke="#808080" stroke-width="1" stroke-dasharray="3,3"/>
<line x1="322" y1="346.5" x2="1854" y2="346.5" stroke="#808080" stroke-width="1" stroke-dasharray="3,3"/>
<line x1="322" y1="417.5" x2="1854" y2="417.5" stroke="#808080" stroke-width="1" stroke-dasharray="3,3"/>
<line x1="322" y1="482.5" x2="1854" y2="482.5" stroke="#808080" stroke-width="1" stroke-dasharray="3,3"/>
<line x1="322" y1="547.5" x2="1854" y2="547.5" stroke="#808080" stroke-width="1" stroke-dasharray="3,3"/>
<line x1="322" y1="612.5" x2="1854" y2="612.5" stroke="#808080" stroke-width="1" stroke-dasharray="3,3"/>
<line x1="385.5" y1="117" x2="385.5" y2="651" stroke="#808080" stroke-width="1" stroke-dasharray="3,3"/>
<line x1="449.5" y1="117" x2="449.5" y2="651" stroke="#808080" stroke-width="1" stroke-dasharray="3,3"/>
<line x1="513.5" y1="117" x2="513.5" y2="651" stroke="#808080" stroke-width="1" stroke-dasharray="3,3"/>
<line x1="577.5" y1="117" x2="577.5" y2="651" stroke="#808080" stroke-width="1" stroke-dasharray="3,3"/>
<line x1="641.5" y1="117" x2="641.5" y2="651" stroke="#808080" stroke-width="1" stroke-dasharray="3,3"/>
<line x1="705.5" y1="117" x2="705.5" y2="651" stroke="#808080" stroke-width="1" stroke-dasharray="3,3"/>
<line x1="769.5" y1="117" x2="769.5" y2="651" stroke="#808080" stroke-width="1" stroke-dasharray="3,3"/>
<line x1="833.5" y1="117" x2="833.5" y2="651" stroke="#808080" stroke-width="1" stroke-dasharray="3,3"/>
<line x1="897.5" y1="117" x2="897.5" y2="651" stroke="#808080" stroke-width="1" stroke-dasharray="3,3"/>
<line x1="961.5" y1="117" x2="961.5" y2="651" stroke="#808080" stroke-width="1" stroke-dasharray="3,3"/>
<line x1="1025.5" y1="117" x2="1025.5" y2="651" stroke="#808080" stroke-width="1" stroke-dasharray="3,3"/>
<line x1="1089.5" y1="117" x2="1089.5" y2="651" stroke="#808080" stroke-width="1" stroke-dasharray="3,3"/>
<line x1="1153.5" y1="117" x2="1153.5" y2="651" stroke="#808080" stroke-width="1" stroke-dasharray="3,3"/>
<line x1="1217.5" y1="117" x2="1217.5" y2="651" stroke="#808080" stroke-width="1" stroke-dasharray="3,3"/>
<line x1="1281.5" y1="117" x2="1281.5" y2="651" stroke="#808080" stroke-width="1" stroke-dasharray="3,3"/>
<line x1="1345.5" y1="117" x2="1345.5" y2="651" stroke="#808080" stroke-width="1" stroke-dasharray="3,3"/>
<line x1="1409.5" y1="117" x2="1409.5" y2="651" stroke="#808080" stroke-width="1" stroke-dasharray="3,3"/>
<line x1="1473.5" y1="117" x2="1473.5" y2="651" stroke="#808080" stroke-width="1" stroke-dasharray="3,3"/>
<line x1="1537.5" y1="117" x2="1537.5" y2="651" stroke="#808080" stroke-width="1" stroke-dasharray="3,3"/>
<line x1="1601.5" y1="117" x2="1601.5" y2="651" stroke="#808080" stroke-width="1" stroke-dasharray="3,3"/>
<line x1="1665.5" y1="117" x2="1665.5" y2="651" stroke="#808080" stroke-width="1" stroke-dasharray="3,3"/>
<line x1="1729.5" y1="117" x2="1729.5" y2="651" stroke="#808080" stroke-width="1" stroke-dasharray="3,3"/>
<line x1="1793.5" y1="117" x2="1793.5" y2="651" stroke="#808080" stroke-width="1" stroke-dasharray="3,3"/>
<rect x="321" y="149" width="1" height="20" fill="#ef5350"/>
<rect x="319" y="152" width="5" height="15" fill="#ef5350"/>
<rect x="329" y="149" width="1" height="32" fill="#3cb96e"/>
<rect x="327" y="151" width="5" height="16" fill="#3cb96e"/>
<rect x="337" y="152" width="1" height="27" fill="#ef5350"/>
<rect x="335" y="152" width="5" height="24" fill="#ef5350"/>
<rect x="345" y="154" width="1" height="23" fill="#3cb96e"/>
<rect x="343" y="164" width="5" height="4" fill="#3cb96e"/>
<rect x="353" y="164" width="1" height="17" fill="#ef5350"/>
<rect x="351" y="165" width="5" height="11" fill="#ef5350"/>
<rect x="361" y="174" width="1" height="10" fill="#ef5350"/>
<rect x="359" y="176" width="5" height="3" fill="#ef5350"/>
<rect x="369" y="178" width="1" height="53" fill="#ef5350"/>
<rect x="367" y="179" width="5" height="22" fill="#ef5350"/>
<rect x="377" y="200" width="1" height="32" fill="#ef5350"/>
<rect x="375" y="202" width="5" height="26" fill="#ef5350"/>
<rect x="385" y="227" width="1" height="37" fill="#ef5350"/>
<rect x="383" y="230" width="5" height="34" fill="#ef5350"/>
<rect x="393" y="263" width="1" height="27" fill="#ef5350"/>
<rect x="391" y="263" width="5" height="17" fill="#ef5350"/>
<rect x="401" y="259" width="1" height="25" fill="#3cb96e"/>
<rect x="399" y="265" width="5" height="17" fill="#3cb96e"/>
<rect x="409" y="255" width="1" height="25" fill="#ef5350"/>
<rect x="407" y="266" width="5" height="7" fill="#ef5350"/>
<rect x="417" y="276" width="1" height="52" fill="#ef5350"/>
<rect x="415" y="276" width="5" height="41" fill="#ef5350"/>
<rect x="425" y="315" width="1" height="24" fill="#ef5350"/>
<rect x="423" y="320" width="5" height="18" fill="#ef5350"/>
<rect x="433" y="310" width="1" height="25" fill="#3cb96e"/>
<rect x="431" y="320" width="5" height="15" fill="#3cb96e"/>
<rect x="441" y="319" width="1" height="31" fill="#ef5350"/>
<rect x="439" y="319" width="5" height="18" fill="#ef5350"/>
<rect x="449" y="338" width="1" height="67" fill="#ef5350"/>
<rect x="447" y="338" width="5" height="64" fill="#ef5350"/>
<rect x="457" y="358" width="1" height="45" fill="#3cb96e"/>
<rect x="455" y="358" width="5" height="42" fill="#3cb96e"/>
<rect x="465" y="307" width="1" height="52" fill="#3cb96e"/>
<rect x="463" y="329" width="5" height="30" fill="#3cb96e"/>
<rect x="473" y="323" width="1" height="31" fill="#3cb96e"/>
<rect x="471" y="323" width="5" height="6" fill="#3cb96e"/>
<rect x="481" y="319" width="1" height="43" fill="#ef5350"/>
<rect x="479" y="322" width="5" height="29" fill="#ef5350"/>
<rect x="489" y="333" width="1" height="17" fill="#3cb96e"/>
<rect x="487" y="340" width="5" height="10" fill="#3cb96e"/>
<rect x="497" y="336" width="1" height="38" fill="#ef5350"/>
<rect x="495" y="346" width="5" height="13" fill="#ef5350"/>
<rect x="505" y="350" width="1" height="31" fill="#ef5350"/>
<rect x="503" y="359" width="5" height="14" fill="#ef5350"/>
<rect x="513" y="366" width="1" height="34" fill="#ef5350"/>
<rect x="511" y="369" width="5" height="25" fill="#ef5350"/>
<rect x="521" y="369" width="1" height="29" fill="#3cb96e"/>
<rect x="519" y="369" width="5" height="23" fill="#3cb96e"/>
<rect x="529" y="342" width="1" height="39" fill="#3cb96e"/>
<rect x="527" y="357" width="5" height="15" fill="#3cb96e"/>
<rect x="537" y="342" width="1" height="20" fill="#3cb96e"/>
<rect x="535" y="346" width="5" height="3" fill="#3cb96e"/>
<rect x="545" y="332" width="1" height="26" fill="#3cb96e"/>
<rect x="543" y="332" width="5" height="16" fill="#3cb96e"/>
<rect x="553" y="328" width="1" height="28" fill="#ef5350"/>
<rect x="551" y="334" width="5" height="13" fill="#ef5350"/>
<rect x="561" y="334" width="1" height="27" fill="#3cb96e"/>
<rect x="559" y="349" width="5" height="5" fill="#3cb96e"/>
<rect x="569" y="296" width="1" height="64" fill="#3cb96e"/>
<rect x="567" y="305" width="5" height="46" fill="#3cb96e"/>
<rect x="577" y="303" width="1" height="21" fill="#ef5350"/>
<rect x="575" y="307" width="5" height="14" fill="#ef5350"/>
<rect x="585" y="307" width="1" height="17" fill="#ef5350"/>
<rect x="583" y="322" width="5" height="2" fill="#ef5350"/>
<rect x="593" y="302" width="1" height="23" fill="#3cb96e"/>
<rect x="591" y="304" width="5" height="19" fill="#3cb96e"/>
<rect x="601" y="279" width="1" height="31" fill="#3cb96e"/>
<rect x="599" y="288" width="5" height="16" fill="#3cb96e"/>
<rect x="609" y="275" width="1" height="13" fill="#3cb96e"/>
<rect x="607" y="278" width="5" height="8" fill="#3cb96e"/>
<rect x="617" y="252" width="1" height="17" fill="#3cb96e"/>
<rect x="615" y="262" width="5" height="7" fill="#3cb96e"/>
<rect x="625" y="250" width="1" height="20" fill="#ef5350"/>
<rect x="623" y="261" width="5" height="7" fill="#ef5350"/>
<rect x="633" y="266" width="1" height="27" fill="#ef5350"/>
<rect x="631" y="268" width="5" height="25" fill="#ef5350"/>
<rect x="641" y="282" width="1" height="53" fill="#ef5350"/>
<rect x="639" y="285" width="5" height="50" fill="#ef5350"/>
<rect x="649" y="330" width="1" height="21" fill="#ef5350"/>
<rect x="647" y="332" width="5" height="16" fill="#ef5350"/>
<rect x="657" y="323" width="1" height="99" fill="#ef5350"/>
<rect x="655" y="334" width="5" height="82" fill="#ef5350"/>
<rect x="665" y="390" width="1" height="54" fill="#3cb96e"/>
<rect x="663" y="390" width="5" height="24" fill="#3cb96e"/>
<rect x="673" y="358" width="1" height="45" fill="#ef5350"/>
<rect x="671" y="381" width="5" height="19" fill="#ef5350"/>
<rect x="681" y="372" width="1" height="44" fill="#3cb96e"/>
<rect x="679" y="388" width="5" height="10" fill="#3cb96e"/>
<rect x="689" y="346" width="1" height="41" fill="#3cb96e"/>
<rect x="687" y="346" width="5" height="41" fill="#3cb96e"/>
<rect x="697" y="324" width="1" height="37" fill="#3cb96e"/>
<rect x="695" y="324" width="5" height="22" fill="#3cb96e"/>
<rect x="705" y="323" width="1" height="27" fill="#ef5350"/>
<rect x="703" y="323" width="5" height="25" fill="#ef5350"/>
<rect x="713" y="332" width="1" height="19" fill="#ef5350"/>
<rect x="711" y="332" width="5" height="9" fill="#ef5350"/>
<rect x="721" y="334" width="1" height="22" fill="#3cb96e"/>
<rect x="719" y="337" width="5" height="5" fill="#3cb96e"/>
<rect x="729" y="315" width="1" height="37" fill="#3cb96e"/>
<rect x="727" y="315" width="5" height="24" fill="#3cb96e"/>
<rect x="737" y="307" width="1" height="27" fill="#ef5350"/>
<rect x="735" y="307" width="5" height="19" fill="#ef5350"/>
<rect x="745" y="325" width="1" height="23" fill="#ef5350"/>
<rect x="743" y="328" width="5" height="9" fill="#ef5350"/>
<rect x="753" y="318" width="1" height="20" fill="#3cb96e"/>
<rect x="751" y="323" width="5" height="15" fill="#3cb96e"/>
<rect x="761" y="320" width="1" height="19" fill="#ef5350"/>
<rect x="759" y="322" width="5" height="17" fill="#ef5350"/>
<rect x="769" y="337" width="1" height="42" fill="#ef5350"/>
<rect x="767" y="337" width="5" height="37" fill="#ef5350"/>
<rect x="777" y="379" width="1" height="39" fill="#ef5350"/>
<rect x="775" y="379" width="5" height="21" fill="#ef5350"/>
<rect x="785" y="402" width="1" height="46" fill="#ef5350"/>
<rect x="783" y="402" width="5" height="42" fill="#ef5350"/>
<rect x="793" y="394" width="1" height="51" fill="#3cb96e"/>
<rect x="791" y="402" width="5" height="41" fill="#3cb96e"/>
<rect x="801" y="391" width="1" height="42" fill="#ef5350"/>
<rect x="799" y="401" width="5" height="32" fill="#ef5350"/>
<rect x="809" y="424" width="1" height="29" fill="#ef5350"/>
<rect x="807" y="430" width="5" height="14" fill="#ef5350"/>
<rect x="817" y="423" width="1" height="34" fill="#ef5350"/>
<rect x="815" y="447" width="5" height="2" fill="#ef5350"/>
<rect x="825" y="448" width="1" height="27" fill="#ef5350"/>
<rect x="823" y="450" width="5" height="15" fill="#ef5350"/>
<rect x="833" y="465" width="1" height="51" fill="#ef5350"/>
<rect x="831" y="465" width="5" height="51" fill="#ef5350"/>
<rect x="841" y="502" width="1" height="19" fill="#3cb96e"/>
<rect x="839" y="502" width="5" height="15" fill="#3cb96e"/>
<rect x="849" y="489" width="1" height="33" fill="#ef5350"/>
<rect x="847" y="503" width="5" height="19" fill="#ef5350"/>
<rect x="857" y="522" width="1" height="50" fill="#ef5350"/>
<rect x="855" y="522" width="5" height="44" fill="#ef5350"/>
<rect x="865" y="542" width="1" height="41" fill="#3cb96e"/>
<rect x="863" y="546" width="5" height="24" fill="#3cb96e"/>
<rect x="873" y="527" width="1" height="31" fill="#ef5350"/>
<rect x="871" y="550" width="5" height="6" fill="#ef5350"/>
<rect x="881" y="553" width="1" height="34" fill="#ef5350"/>
<rect x="879" y="553" width="5" height="31" fill="#ef5350"/>
<rect x="889" y="562" width="1" height="26" fill="#3cb96e"/>
<rect x="887" y="574" width="5" height="11" fill="#3cb96e"/>
<rect x="897" y="569" width="1" height="43" fill="#3cb96e"/>
<rect x="895" y="574" width="5" height="2" fill="#3cb96e"/>
<rect x="905" y="560" width="1" height="35" fill="#ef5350"/>
<rect x="903" y="568" width="5" height="24" fill="#ef5350"/>
<rect x="913" y="564" width="1" height="21" fill="#3cb96e"/>
<rect x="911" y="564" width="5" height="21" fill="#3cb96e"/>
<rect x="921" y="560" width="1" height="36" fill="#ef5350"/>
<rect x="919" y="565" width="5" height="31" fill="#ef5350"/>
<rect x="929" y="540" width="1" height="64" fill="#3cb96e"/>
<rect x="927" y="543" width="5" height="52" fill="#3cb96e"/>
<rect x="937" y="540" width="1" height="21" fill="#3cb96e"/>
<rect x="935" y="546" width="5" height="2" fill="#3cb96e"/>
<rect x="945" y="540" width="1" height="29" fill="#ef5350"/>
<rect x="943" y="544" width="5" height="25" fill="#ef5350"/>
<rect x="953" y="542" width="1" height="28" fill="#3cb96e"/>
<rect x="951" y="544" width="5" height="26" fill="#3cb96e"/>
<rect x="961" y="527" width="1" height="44" fill="#ef5350"/>
<rect x="959" y="543" width="5" height="28" fill="#ef5350"/>
<rect x="969" y="564" width="1" height="46" fill="#ef5350"/>
<rect x="967" y="569" width="5" height="33" fill="#ef5350"/>
<rect x="977" y="588" width="1" height="25" fill="#3cb96e"/>
<rect x="975" y="600" width="5" height="2" fill="#3cb96e"/>
<rect x="985" y="592" width="1" height="43" fill="#ef5350"/>
<rect x="983" y="597" width="5" height="38" fill="#ef5350"/>
<rect x="993" y="621" width="1" height="16" fill="#3cb96e"/>
<rect x="991" y="631" width="5" height="2" fill="#3cb96e"/>
<rect x="1001" y="592" width="1" height="36" fill="#3cb96e"/>
<rect x="999" y="610" width="5" height="18" fill="#3cb96e"/>
<rect x="1009" y="604" width="1" height="24" fill="#3cb96e"/>
<rect x="1007" y="608" width="5" height="5" fill="#3cb96e"/>
<rect x="1017" y="577" width="1" height="45" fill="#3cb96e"/>
<rect x="1015" y="578" width="5" height="32" fill="#3cb96e"/>
<rect x="1025" y="556" width="1" height="32" fill="#ef5350"/>
<rect x="1023" y="573" width="5" height="11" fill="#ef5350"/>
<rect x="1033" y="560" width="1" height="23" fill="#3cb96e"/>
<rect x="1031" y="560" width="5" height="23" fill="#3cb96e"/>
<rect x="1041" y="551" width="1" height="34" fill="#ef5350"/>
<rect x="1039" y="558" width="5" height="26" fill="#ef5350"/>
<rect x="1049" y="565" width="1" height="22" fill="#3cb96e"/>
<rect x="1047" y="571" width="5" height="9" fill="#3cb96e"/>
<rect x="1057" y="543" width="1" height="31" fill="#3cb96e"/>
<rect x="1055" y="556" width="5" height="18" fill="#3cb96e"/>
<rect x="1065" y="516" width="1" height="42" fill="#3cb96e"/>
<rect x="1063" y="531" width="5" height="27" fill="#3cb96e"/>
<rect x="1073" y="530" width="1" height="11" fill="#ef5350"/>
<rect x="1071" y="531" width="5" height="4" fill="#ef5350"/>
<rect x="1081" y="515" width="1" height="42" fill="#ef5350"/>
<rect x="1079" y="530" width="5" height="27" fill="#ef5350"/>
<rect x="1089" y="552" width="1" height="32" fill="#ef5350"/>
<rect x="1087" y="557" width="5" height="23" fill="#ef5350"/>
<rect x="1097" y="534" width="1" height="40" fill="#3cb96e"/>
<rect x="1095" y="534" width="5" height="39" fill="#3cb96e"/>
<rect x="1105" y="524" width="1" height="10" fill="#3cb96e"/>
<rect x="1103" y="527" width="5" height="7" fill="#3cb96e"/>
<rect x="1113" y="526" width="1" height="39" fill="#ef5350"/>
<rect x="1111" y="533" width="5" height="32" fill="#ef5350"/>
<rect x="1121" y="569" width="1" height="19" fill="#ef5350"/>
<rect x="1119" y="569" width="5" height="19" fill="#ef5350"/>
<rect x="1129" y="579" width="1" height="9" fill="#3cb96e"/>
<rect x="1127" y="582" width="5" height="6" fill="#3cb96e"/>
<rect x="1137" y="537" width="1" height="45" fill="#3cb96e"/>
<rect x="1135" y="537" width="5" height="45" fill="#3cb96e"/>
<rect x="1145" y="542" width="1" height="29" fill="#ef5350"/>
<rect x="1143" y="542" width="5" height="26" fill="#ef5350"/>
<rect x="1153" y="545" width="1" height="37" fill="#3cb96e"/>
<rect x="1151" y="569" width="5" height="3" fill="#3cb96e"/>
<rect x="1161" y="554" width="1" height="28" fill="#3cb96e"/>
<rect x="1159" y="557" width="5" height="11" fill="#3cb96e"/>
<rect x="1169" y="540" width="1" height="56" fill="#ef5350"/>
<rect x="1167" y="555" width="5" height="41" fill="#ef5350"/>
<rect x="1177" y="582" width="1" height="28" fill="#3cb96e"/>
<rect x="1175" y="586" width="5" height="5" fill="#3cb96e"/>
<rect x="1185" y="587" width="1" height="23" fill="#ef5350"/>
<rect x="1183" y="587" width="5" height="19" fill="#ef5350"/>
<rect x="1193" y="594" width="1" height="18" fill="#3cb96e"/>
<rect x="1191" y="596" width="5" height="12" fill="#3cb96e"/>
<rect x="1201" y="588" width="1" height="14" fill="#3cb96e"/>
<rect x="1199" y="592" width="5" height="6" fill="#3cb96e"/>
<rect x="1209" y="582" width="1" height="19" fill="#3cb96e"/>
<rect x="1207" y="586" width="5" height="6" fill="#3cb96e"/>
<rect x="1217" y="564" width="1" height="25" fill="#3cb96e"/>
<rect x="1215" y="571" width="5" height="15" fill="#3cb96e"/>
<rect x="1225" y="539" width="1" height="41" fill="#3cb96e"/>
<rect x="1223" y="544" width="5" height="28" fill="#3cb96e"/>
<rect x="1233" y="534" width="1" height="18" fill="#3cb96e"/>
<rect x="1231" y="540" width="5" height="4" fill="#3cb96e"/>
<rect x="1241" y="517" width="1" height="26" fill="#3cb96e"/>
<rect x="1239" y="530" width="5" height="13" fill="#3cb96e"/>
<rect x="1257" y="526" width="1" height="34" fill="#ef5350"/>
<rect x="1255" y="526" width="5" height="30" fill="#ef5350"/>
<rect x="1265" y="564" width="1" height="18" fill="#ef5350"/>
<rect x="1263" y="566" width="5" height="10" fill="#ef5350"/>
<rect x="1273" y="527" width="1" height="47" fill="#3cb96e"/>
<rect x="1271" y="527" width="5" height="47" fill="#3cb96e"/>
<rect x="1281" y="515" width="1" height="19" fill="#3cb96e"/>
<rect x="1279" y="520" width="5" height="10" fill="#3cb96e"/>
<rect x="1289" y="518" width="1" height="12" fill="#ef5350"/>
<rect x="1287" y="518" width="5" height="12" fill="#ef5350"/>
<rect x="1297" y="529" width="1" height="19" fill="#ef5350"/>
<rect x="1295" y="530" width="5" height="13" fill="#ef5350"/>
<rect x="1305" y="517" width="1" height="26" fill="#3cb96e"/>
<rect x="1303" y="517" width="5" height="24" fill="#3cb96e"/>
<rect x="1313" y="509" width="1" height="25" fill="#ef5350"/>
<rect x="1311" y="516" width="5" height="18" fill="#ef5350"/>
<rect x="1321" y="530" width="1" height="19" fill="#3cb96e"/>
<rect x="1319" y="537" width="5" height="7" fill="#3cb96e"/>
<rect x="1329" y="530" width="1" height="19" fill="#ef5350"/>
<rect x="1327" y="537" width="5" height="12" fill="#ef5350"/>
<rect x="1337" y="526" width="1" height="18" fill="#3cb96e"/>
<rect x="1335" y="537" width="5" height="4" fill="#3cb96e"/>
<rect x="1345" y="530" width="1" height="11" fill="#3cb96e"/>
<rect x="1343" y="530" width="5" height="10" fill="#3cb96e"/>
<rect x="1353" y="522" width="1" height="21" fill="#3cb96e"/>
<rect x="1351" y="527" width="5" height="16" fill="#3cb96e"/>
<rect x="1361" y="521" width="1" height="27" fill="#ef5350"/>
<rect x="1359" y="529" width="5" height="19" fill="#ef5350"/>
<rect x="1369" y="539" width="1" height="23" fill="#3cb96e"/>
<rect x="1367" y="542" width="5" height="7" fill="#3cb96e"/>
<rect x="1377" y="539" width="1" height="28" fill="#ef5350"/>
<rect x="1375" y="539" width="5" height="21" fill="#ef5350"/>
<rect x="1385" y="557" width="1" height="27" fill="#ef5350"/>
<rect x="1383" y="557" width="5" height="13" fill="#ef5350"/>
<rect x="1393" y="534" width="1" height="37" fill="#3cb96e"/>
<rect x="1391" y="534" width="5" height="37" fill="#3cb96e"/>
<rect x="1401" y="522" width="1" height="28" fill="#3cb96e"/>
<rect x="1399" y="529" width="5" height="6" fill="#3cb96e"/>
<rect x="1409" y="505" width="1" height="25" fill="#3cb96e"/>
<rect x="1407" y="505" width="5" height="25" fill="#3cb96e"/>
<rect x="1417" y="502" width="1" height="21" fill="#ef5350"/>
<rect x="1415" y="505" width="5" height="13" fill="#ef5350"/>
<rect x="1425" y="505" width="1" height="14" fill="#3cb96e"/>
<rect x="1423" y="516" width="5" height="3" fill="#3cb96e"/>
<rect x="1433" y="505" width="1" height="27" fill="#3cb96e"/>
<rect x="1431" y="505" width="5" height="13" fill="#3cb96e"/>
<rect x="1441" y="490" width="1" height="31" fill="#ef5350"/>
<rect x="1439" y="504" width="5" height="14" fill="#ef5350"/>
<rect x="1449" y="518" width="1" height="26" fill="#ef5350"/>
<rect x="1447" y="518" width="5" height="26" fill="#ef5350"/>
<rect x="1457" y="543" width="1" height="35" fill="#ef5350"/>
<rect x="1455" y="543" width="5" height="35" fill="#ef5350"/>
<rect x="1465" y="554" width="1" height="22" fill="#3cb96e"/>
<rect x="1463" y="557" width="5" height="19" fill="#3cb96e"/>
<rect x="1473" y="533" width="1" height="31" fill="#3cb96e"/>
<rect x="1471" y="534" width="5" height="22" fill="#3cb96e"/>
<rect x="1481" y="531" width="1" height="29" fill="#ef5350"/>
<rect x="1479" y="537" width="5" height="21" fill="#ef5350"/>
<rect x="1489" y="557" width="1" height="21" fill="#ef5350"/>
<rect x="1487" y="557" width="5" height="19" fill="#ef5350"/>
<rect x="1505" y="574" width="1" height="30" fill="#ef5350"/>
<rect x="1503" y="574" width="5" height="26" fill="#ef5350"/>
<rect x="1513" y="596" width="1" height="19" fill="#ef5350"/>
<rect x="1511" y="596" width="5" height="19" fill="#ef5350"/>
<rect x="1521" y="606" width="1" height="20" fill="#ef5350"/>
<rect x="1519" y="612" width="5" height="12" fill="#ef5350"/>
<rect x="1529" y="609" width="1" height="14" fill="#3cb96e"/>
<rect x="1527" y="618" width="5" height="5" fill="#3cb96e"/>
</g>
<line x1="321" y1="618.5" x2="1854" y2="618.5" stroke="#9a9090" stroke-width="1"/>
<line x1="321" y1="621.5" x2="1854" y2="621.5" stroke="#32cd32" stroke-width="1" stroke-dasharray="9,6,3,6"/>
<rect x="320.5" y="118.5" width="1534" height="533" fill="none" stroke="#fff" stroke-width="1"/>
<polygon points="1538,119 1554,119 1546,127" fill="#6e6e6e" shape-rendering="auto"/>
<polygon points="324,126 336,126 330,132" fill="#fff" shape-rendering="auto"/>
<text x="341.3" y="135" fill="#fff" font-family="Liberation Sans" font-size="13.1px">GBPUSD.pc,M1</text>
<text x="442.5" y="135" fill="#fff" font-family="Liberation Sans" font-size="14.45px">1.33642 1.33652 1.33642 1.33645</text>
<text x="1827.3" y="136" fill="#fff" font-family="Liberation Sans" font-size="13.8px" text-anchor="end">US Odyssey 1.0_fix</text>
<g shape-rendering="auto" fill="none" stroke="#fff" stroke-width="1.1"><circle cx="1840.5" cy="132.5" r="7.5"/><path d="M1836.5,134 q4,4 8,0"/></g><circle cx="1838" cy="130" r="0.9" fill="#fff"/><circle cx="1843" cy="130" r="0.9" fill="#fff"/>
<text x="330" y="618" fill="#fff" font-family="Liberation Sans" font-size="15px">#52741152 buy 0.01</text>
<g shape-rendering="auto"><path d="M1524,617 L1529,617 L1532,621 L1529,625 L1524,625 L1526,621 Z" fill="#0000ff" stroke="#fff" stroke-width="1.2"/></g>
<rect x="1855" y="145" width="3" height="1" fill="#fff"/>
<text x="1861.5" y="150.5" fill="#fff" font-family="Liberation Sans" font-size="14.5px">1.34010</text>
<rect x="1855" y="210" width="3" height="1" fill="#fff"/>
<text x="1861.5" y="215.5" fill="#fff" font-family="Liberation Sans" font-size="14.5px">1.33960</text>
<rect x="1855" y="281" width="3" height="1" fill="#fff"/>
<text x="1861.5" y="286.5" fill="#fff" font-family="Liberation Sans" font-size="14.5px">1.33905</text>
<rect x="1855" y="346" width="3" height="1" fill="#fff"/>
<text x="1861.5" y="351.5" fill="#fff" font-family="Liberation Sans" font-size="14.5px">1.33855</text>
<rect x="1855" y="417" width="3" height="1" fill="#fff"/>
<text x="1861.5" y="422.5" fill="#fff" font-family="Liberation Sans" font-size="14.5px">1.33800</text>
<rect x="1855" y="482" width="3" height="1" fill="#fff"/>
<text x="1861.5" y="487.5" fill="#fff" font-family="Liberation Sans" font-size="14.5px">1.33750</text>
<rect x="1855" y="547" width="3" height="1" fill="#fff"/>
<text x="1861.5" y="552.5" fill="#fff" font-family="Liberation Sans" font-size="14.5px">1.33700</text>
<rect x="1855" y="612" width="3" height="1" fill="#fff"/>
<text x="1861.5" y="617.5" fill="#fff" font-family="Liberation Sans" font-size="14.5px">1.33650</text>
<rect x="1856" y="610" width="61" height="17" fill="#fff"/>
<text x="1861.5" y="624" fill="#000" font-family="Liberation Sans" font-size="14.5px">1.33645</text>
<rect x="321" y="652" width="1" height="3" fill="#fff"/>
<text x="319.4" y="669" fill="#fff" font-family="Liberation Sans" font-size="14.6px">30 Apr 2025</text>
<rect x="449" y="652" width="1" height="3" fill="#fff"/>
<text x="447.4" y="669" fill="#fff" font-family="Liberation Sans" font-size="14.6px">30 Apr 10:34</text>
<rect x="577" y="652" width="1" height="3" fill="#fff"/>
<text x="575.4" y="669" fill="#fff" font-family="Liberation Sans" font-size="14.6px">30 Apr 10:50</text>
<rect x="705" y="652" width="1" height="3" fill="#fff"/>
<text x="703.4" y="669" fill="#fff" font-family="Liberation Sans" font-size="14.6px">30 Apr 11:06</text>
<rect x="833" y="652" width="1" height="3" fill="#fff"/>
<text x="831.4" y="669" fill="#fff" font-family="Liberation Sans" font-size="14.6px">30 Apr 11:22</text>
<rect x="961" y="652" width="1" height="3" fill="#fff"/>
<text x="959.4" y="669" fill="#fff" font-family="Liberation Sans" font-size="14.6px">30 Apr 11:38</text>
<rect x="1089" y="652" width="1" height="3" fill="#fff"/>
<text x="1087.4" y="669" fill="#fff" font-family="Liberation Sans" font-size="14.6px">30 Apr 11:54</text>
<rect x="1217" y="652" width="1" height="3" fill="#fff"/>
<text x="1215.4" y="669" fill="#fff" font-family="Liberation Sans" font-size="14.6px">30 Apr 12:10</text>
<rect x="1345" y="652" width="1" height="3" fill="#fff"/>
<text x="1343.4" y="669" fill="#fff" font-family="Liberation Sans" font-size="14.6px">30 Apr 12:26</text>
<rect x="1473" y="652" width="1" height="3" fill="#fff"/>
<text x="1471.4" y="669" fill="#fff" font-family="Liberation Sans" font-size="14.6px">30 Apr 12:42</text>
</svg>
<div style="position:absolute;left:317px;top:678px;width:1600px;height:32px;background:#f0f0f0;"></div>
<div style="position:absolute;left:317px;top:680px;width:1600px;height:1px;background:#000;"></div>
<div style="position:absolute;left:480px;top:680px;width:151px;height:30px;background:#fff;box-sizing:border-box;border:1px solid #000;border-top:none;"></div>
<div style="position:absolute;left:337.9px;top:687.99px;font-size:17.5px;line-height:1;color:#808080;font-weight:400;white-space:pre;transform:scaleX(0.9848);transform-origin:left top;">USDCAD.pc,M1</div>
<div style="position:absolute;left:494px;top:687.99px;font-size:17.5px;line-height:1;color:#111;font-weight:400;white-space:pre;transform:scaleX(0.9531);transform-origin:left top;">GBPUSD.pc,M1</div>
<svg style="position:absolute;left:1878px;top:687px" width="10" height="12" viewBox="0 0 10 12"><path d="M8,1 v10 l-6,-5z" fill="#a0a0a0"/></svg>
<svg style="position:absolute;left:1906px;top:687px" width="10" height="12" viewBox="0 0 10 12"><path d="M2,1 v10 l6,-5z" fill="#a0a0a0"/></svg>
<div style="position:absolute;left:8px;top:710px;width:1909px;height:1px;background:#a0a0a0;"></div>
<div style="position:absolute;left:8px;top:711px;width:1909px;height:1px;background:#fdfdfd;"></div>
<svg style="position:absolute;left:15px;top:721px" width="10" height="10" viewBox="0 0 10 10"><path d="M1,1 l8,8 M9,1 l-8,8" stroke="#000" stroke-width="2.2"/></svg>
<div style="position:absolute;left:10px;top:740px;width:21px;height:89px;background:#cfe0f2;"></div>
<div style="position:absolute;left:32px;top:718px;width:1885px;height:111px;background:#fff;box-sizing:border-box;border-left:1px solid #a0a0a0;border-top:1px solid #a0a0a0;"></div>
<div style="position:absolute;left:33px;top:750px;width:1884px;height:1px;background:#d8d8d8;"></div>
<div style="position:absolute;left:33px;top:780px;width:1884px;height:30px;background:#c8c8c8;"></div>
<div style="position:absolute;left:184px;top:719px;width:1px;height:61px;background:#e0e0e0;"></div>
<div style="position:absolute;left:395px;top:719px;width:1px;height:61px;background:#e0e0e0;"></div>
<div style="position:absolute;left:500px;top:719px;width:1px;height:61px;background:#e0e0e0;"></div>
<div style="position:absolute;left:582px;top:719px;width:1px;height:61px;background:#e0e0e0;"></div>
<div style="position:absolute;left:687px;top:719px;width:1px;height:61px;background:#e0e0e0;"></div>
<div style="position:absolute;left:804px;top:719px;width:1px;height:61px;background:#e0e0e0;"></div>
<div style="position:absolute;left:921px;top:719px;width:1px;height:61px;background:#e0e0e0;"></div>
<div style="position:absolute;left:1038px;top:719px;width:1px;height:61px;background:#e0e0e0;"></div>
<div style="position:absolute;left:1155px;top:719px;width:1px;height:61px;background:#e0e0e0;"></div>
<div style="position:absolute;left:1272px;top:719px;width:1px;height:61px;background:#e0e0e0;"></div>
<div style="position:absolute;left:1389px;top:719px;width:1px;height:61px;background:#e0e0e0;"></div>
<div style="position:absolute;left:1564px;top:719px;width:1px;height:61px;background:#e0e0e0;"></div>
<div style="position:absolute;left:38.7px;top:728.13px;font-size:17.8px;line-height:1;color:#111;font-weight:400;white-space:pre;transform:scaleX(1.011);transform-origin:left top;">Order</div>
<div style="position:absolute;left:95px;top:731.38px;font-size:9px;line-height:1;color:#999;font-weight:400;white-space:pre;">/</div>
<div style="position:absolute;right:1526.30px;top:728.39px;font-size:17.5px;line-height:1;color:#111;font-weight:400;white-space:pre;">Time</div>
<div style="position:absolute;right:1420.80px;top:728.39px;font-size:17.5px;line-height:1;color:#111;font-weight:400;white-space:pre;">Type</div>
<div style="position:absolute;right:1338.80px;top:728.39px;font-size:17.5px;line-height:1;color:#111;font-weight:400;white-space:pre;">Size</div>
<div style="position:absolute;right:1233.80px;top:728.39px;font-size:17.5px;line-height:1;color:#111;font-weight:400;white-space:pre;">Symbol</div>
<div style="position:absolute;right:1116.80px;top:728.39px;font-size:17.5px;line-height:1;color:#111;font-weight:400;white-space:pre;">Price</div>
<div style="position:absolute;right:999.30px;top:728.39px;font-size:17.5px;line-height:1;color:#111;font-weight:400;white-space:pre;">S / L</div>
<div style="position:absolute;right:882.80px;top:728.39px;font-size:17.5px;line-height:1;color:#111;font-weight:400;white-space:pre;">T / P</div>
<div style="position:absolute;right:766.30px;top:728.39px;font-size:17.5px;line-height:1;color:#111;font-weight:400;white-space:pre;">Price</div>
<div style="position:absolute;right:648.80px;top:728.39px;font-size:17.5px;line-height:1;color:#111;font-weight:400;white-space:pre;">Commission</div>
<div style="position:absolute;right:532.30px;top:728.39px;font-size:17.5px;line-height:1;color:#111;font-weight:400;white-space:pre;">Swap</div>
<div style="position:absolute;right:357.30px;top:728.39px;font-size:17.5px;line-height:1;color:#111;font-weight:400;white-space:pre;">Profit</div>
<div style="position:absolute;right:3.80px;top:728.39px;font-size:17.5px;line-height:1;color:#111;font-weight:400;white-space:pre;">Comment</div>
<div style="position:absolute;right:1526.30px;top:758.39px;font-size:17.5px;line-height:1;color:#111;font-weight:400;white-space:pre;">2025.04.30 12:49:01</div>
<div style="position:absolute;right:1420.80px;top:758.39px;font-size:17.5px;line-height:1;color:#111;font-weight:400;white-space:pre;">buy</div>
<div style="position:absolute;right:1338.80px;top:758.39px;font-size:17.5px;line-height:1;color:#111;font-weight:400;white-space:pre;">0.01</div>
<div style="position:absolute;right:1233.80px;top:758.39px;font-size:17.5px;line-height:1;color:#111;font-weight:400;white-space:pre;">gbpusd.pc</div>
<div style="position:absolute;right:1116.80px;top:758.39px;font-size:17.5px;line-height:1;color:#111;font-weight:400;white-space:pre;">1.33643</div>
<div style="position:absolute;right:999.30px;top:758.39px;font-size:17.5px;line-height:1;color:#111;font-weight:400;white-space:pre;">0.00000</div>
<div style="position:absolute;right:882.80px;top:758.39px;font-size:17.5px;line-height:1;color:#111;font-weight:400;white-space:pre;">0.00000</div>
<div style="position:absolute;right:766.30px;top:758.39px;font-size:17.5px;line-height:1;color:#111;font-weight:400;white-space:pre;">1.33645</div>
<div style="position:absolute;right:648.80px;top:758.39px;font-size:17.5px;line-height:1;color:#111;font-weight:400;white-space:pre;">-0.06</div>
<div style="position:absolute;right:532.30px;top:758.39px;font-size:17.5px;line-height:1;color:#111;font-weight:400;white-space:pre;">0.00</div>
<div style="position:absolute;right:387.30px;top:758.39px;font-size:17.5px;line-height:1;color:#111;font-weight:400;white-space:pre;">0.02</div>
<svg style="position:absolute;left:37px;top:753px" width="22" height="26" viewBox="0 0 22 26"><path d="M1.5,1.5 h11 l5,5 v16 h-16 z" fill="#fafafa" stroke="#888"/><path d="M12.5,1.5 v5 h5" fill="none" stroke="#888"/><circle cx="16" cy="19" r="5" fill="#3a90e0" stroke="#1a60b0"/></svg>
<div style="position:absolute;left:63.599999999999994px;top:758.39px;font-size:17.5px;line-height:1;color:#111;font-weight:400;white-space:pre;transform:scaleX(1.0384);transform-origin:left top;">52741152</div>
<svg style="position:absolute;left:1540px;top:757px" width="19" height="18" viewBox="0 0 19 18"><path d="M1,1 L18,17 M18,1 L1,17" stroke="#888" stroke-width="1.6"/></svg>
<svg style="position:absolute;left:37px;top:784px" width="19" height="22" viewBox="0 0 19 22"><rect x="1.5" y="1.5" width="16" height="19" rx="1" fill="#fafafa" stroke="#888"/><path d="M7,6 h5 v5 h3 l-5.5,6 l-5.5,-6 h3z" fill="#f04018"/></svg>
<div style="position:absolute;left:64.1px;top:788.30px;font-size:17.6px;line-height:1;color:#000;font-weight:700;white-space:pre;transform:scaleX(0.9734);transform-origin:left top;">Balance: 547.01 USC</div>
<div style="position:absolute;left:245px;top:788.30px;font-size:17.6px;line-height:1;color:#000;font-weight:700;white-space:pre;transform:scaleX(0.9758);transform-origin:left top;">Equity: 546.97</div>
<div style="position:absolute;left:373.6px;top:788.30px;font-size:17.6px;line-height:1;color:#000;font-weight:700;white-space:pre;transform:scaleX(0.9932);transform-origin:left top;">Margin: 2.67</div>
<div style="position:absolute;left:489.8px;top:788.30px;font-size:17.6px;line-height:1;color:#000;font-weight:700;white-space:pre;transform:scaleX(0.9829);transform-origin:left top;">Free margin: 544.30</div>
<div style="position:absolute;left:665.7px;top:788.30px;font-size:17.6px;line-height:1;color:#000;font-weight:700;white-space:pre;transform:scaleX(1.0246);transform-origin:left top;">Margin level: 20463.92%</div>
<div style="position:absolute;right:387.30px;top:787.76px;font-size:17.3px;line-height:1;color:#000;font-weight:700;white-space:pre;">-0.04</div>
</body></html>
